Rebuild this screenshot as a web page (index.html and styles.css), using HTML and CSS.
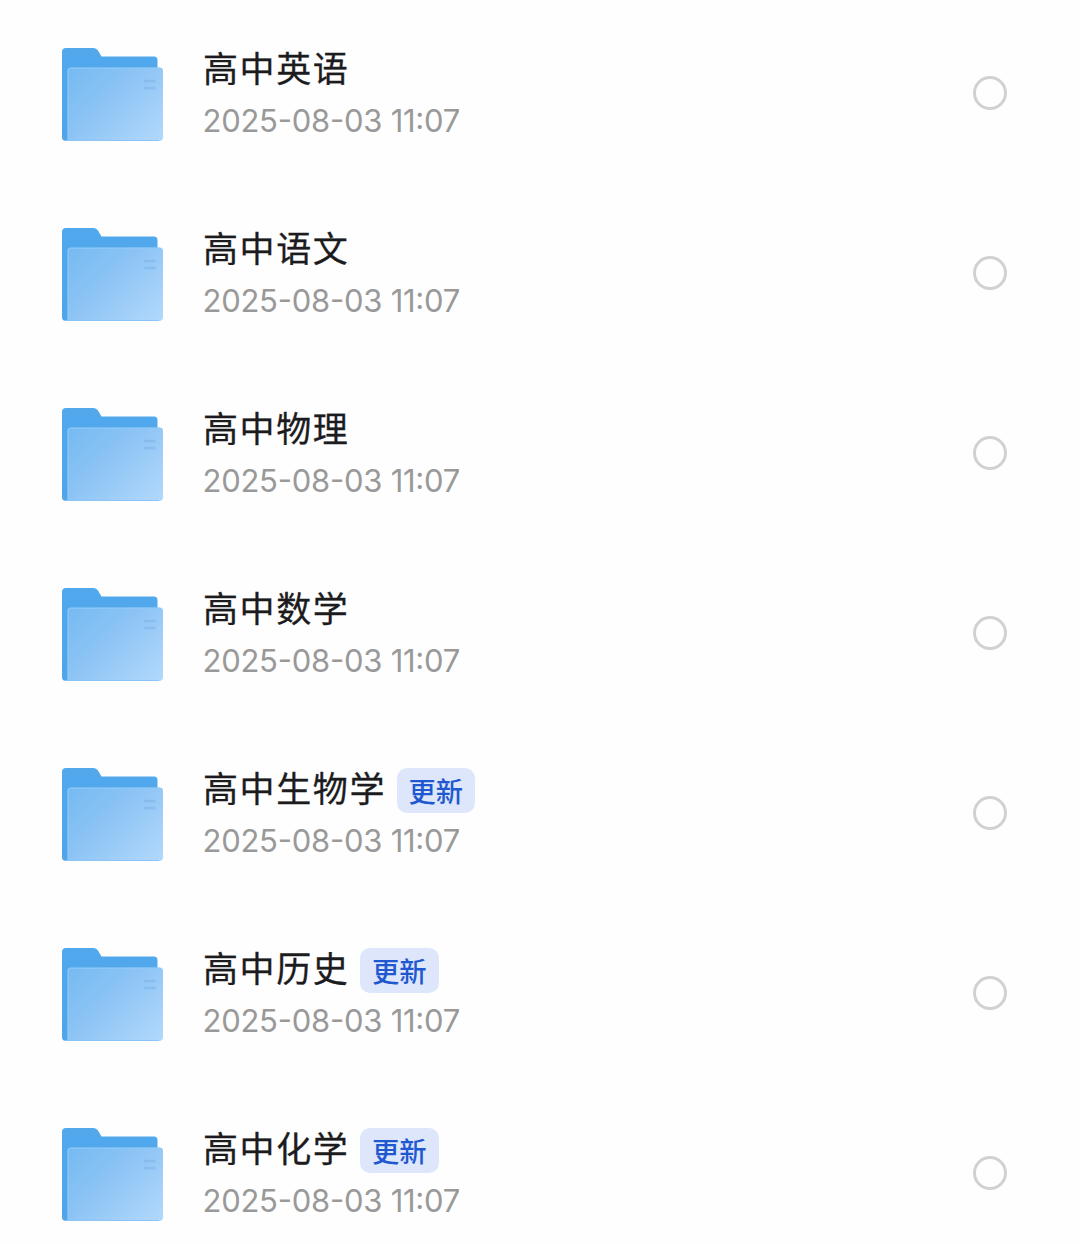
FILE: index.html
```html
<!DOCTYPE html>
<html lang="zh-CN">
<head>
    <meta charset="UTF-8">
    <meta name="viewport" content="width=device-width, initial-scale=1.0">
    <title>高中</title>
    <link rel="stylesheet" href="styles.css">
</head>
<body>
    <svg class="icon-defs" width="0" height="0">
        <defs>
            <linearGradient id="folderBack" x1="0" y1="0" x2="0" y2="1">
                <stop offset="0" stop-color="#51a8ed"/>
                <stop offset="1" stop-color="#4fa5e9"/>
            </linearGradient>
            <linearGradient id="folderFront" x1="0" y1="0.1" x2="1" y2="0.9">
                <stop offset="0" stop-color="#77bbf2"/>
                <stop offset="0.4" stop-color="#8bc3f4"/>
                <stop offset="1" stop-color="#b0d7fc"/>
            </linearGradient>
            <symbol id="folder" viewBox="0 0 102 94">
                <path d="M4 0H31.5Q34.5 0 36 2.5L39.5 8.5H92Q95.5 8.5 95.5 12V60H50L10 93H4Q0 93 0 89V4Q0 0 4 0Z" fill="url(#folderBack)"/>
                <path d="M8.5 19.5H97.5Q101 19.5 101 23V89Q101 93 97 93H5.5V22.5Q5.5 19.5 8.5 19.5Z" fill="url(#folderFront)"/>
                <path d="M6.2 92V23Q6.2 20.2 9 20.2H98" fill="none" stroke="#8fcaf8" stroke-width="1.4" opacity="0.7"/>
                <path d="M3 92.5H97" stroke="#8cc4f3" stroke-width="1"/>
                <path d="M82 33H93.5M82 40H93.5" stroke="#82b7e9" stroke-width="2.4" opacity="0.65"/>
            </symbol>
        </defs>
    </svg>

    <div class="file-list">
        <div class="file-item">
            <svg class="folder-icon"><use href="#folder"/></svg>
            <div class="file-info">
                <div class="file-title"><span class="file-name">高中英语</span></div>
                <p class="file-date">2025-08-03 11:07</p>
            </div>
            <span class="select-circle"></span>
        </div>

        <div class="file-item">
            <svg class="folder-icon"><use href="#folder"/></svg>
            <div class="file-info">
                <div class="file-title"><span class="file-name">高中语文</span></div>
                <p class="file-date">2025-08-03 11:07</p>
            </div>
            <span class="select-circle"></span>
        </div>

        <div class="file-item">
            <svg class="folder-icon"><use href="#folder"/></svg>
            <div class="file-info">
                <div class="file-title"><span class="file-name">高中物理</span></div>
                <p class="file-date">2025-08-03 11:07</p>
            </div>
            <span class="select-circle"></span>
        </div>

        <div class="file-item">
            <svg class="folder-icon"><use href="#folder"/></svg>
            <div class="file-info">
                <div class="file-title"><span class="file-name">高中数学</span></div>
                <p class="file-date">2025-08-03 11:07</p>
            </div>
            <span class="select-circle"></span>
        </div>

        <div class="file-item">
            <svg class="folder-icon"><use href="#folder"/></svg>
            <div class="file-info">
                <div class="file-title"><span class="file-name">高中生物学</span><span class="tag">更新</span></div>
                <p class="file-date">2025-08-03 11:07</p>
            </div>
            <span class="select-circle"></span>
        </div>

        <div class="file-item">
            <svg class="folder-icon"><use href="#folder"/></svg>
            <div class="file-info">
                <div class="file-title"><span class="file-name">高中历史</span><span class="tag">更新</span></div>
                <p class="file-date">2025-08-03 11:07</p>
            </div>
            <span class="select-circle"></span>
        </div>

        <div class="file-item">
            <svg class="folder-icon"><use href="#folder"/></svg>
            <div class="file-info">
                <div class="file-title"><span class="file-name">高中化学</span><span class="tag">更新</span></div>
                <p class="file-date">2025-08-03 11:07</p>
            </div>
            <span class="select-circle"></span>
        </div>
    </div>
</body>
</html>
```
FILE: styles.css
```css
* {
    box-sizing: border-box;
    margin: 0;
    padding: 0;
}

body {
    font-family: Inter, "Noto Sans CJK SC", sans-serif;
    background: #fefefe;
    height: 1244px;
    overflow: hidden;
}

.icon-defs {
    display: block;
}

.file-list {
    padding: 3px 73px 0 62px;
}

.file-item {
    display: flex;
    align-items: center;
    height: 180px;
}

.folder-icon {
    width: 102px;
    height: 94px;
    margin-top: 4px;
}

.file-info {
    flex: 1;
    height: 90px;
    margin-left: 38.5px;
}

.file-title {
    display: flex;
    align-items: flex-start;
    height: 45px;
    margin-bottom: 10px;
}

.file-name {
    margin-left: 0.5px;
    font-size: 35px;
    line-height: 42px;
    letter-spacing: 1.6px;
    color: #1c1c1e;
    -webkit-text-stroke: 0.3px #1c1c1e;
}

.tag {
    height: 45px;
    margin-left: 10.5px;
    padding: 2px 12px 0;
    border-radius: 10px;
    background: #dde6fb;
    color: #1f58cf;
    font-size: 27.3px;
    font-weight: 500;
    line-height: 45px;
}

.file-date {
    font-size: 31px;
    line-height: 36px;
    letter-spacing: -0.25px;
    font-feature-settings: "case";
    white-space: nowrap;
    color: #999;
}

.select-circle {
    width: 34px;
    height: 34px;
    border: 3px solid #d0d1d1;
    border-radius: 50%;
}
```
